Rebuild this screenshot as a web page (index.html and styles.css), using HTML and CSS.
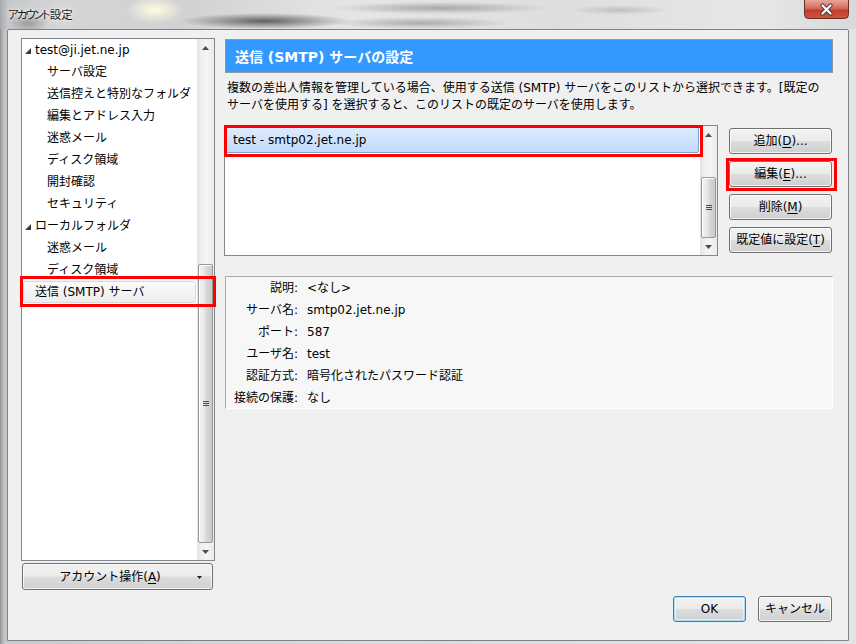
FILE: index.html
```html
<!DOCTYPE html>
<html lang="ja">
<head>
<meta charset="utf-8">
<title>アカウント設定</title>
<link rel="stylesheet" href="styles.css">
</head>
<body>
<div class="window">
  <div class="titlebar">
    <span class="title"><span class="kana">アカウント</span>設定</span>
    <div class="close">
      <svg width="45" height="19" viewBox="0 0 45 19">
        <defs>
          <linearGradient id="cg" x1="0" y1="0" x2="0" y2="1">
            <stop offset="0" stop-color="#e8a89b"/>
            <stop offset="0.45" stop-color="#d46a58"/>
            <stop offset="0.55" stop-color="#c23f2b"/>
            <stop offset="1" stop-color="#d0533b"/>
          </linearGradient>
        </defs>
        <path d="M0.5 0 V14.5 Q0.5 18.5 4.5 18.5 H40.5 Q44.5 18.5 44.5 14.5 V0" fill="url(#cg)" stroke="#6b2d24" stroke-width="1"/>
        <path d="M18.5 5.5 L26.5 13.5 M26.5 5.5 L18.5 13.5" stroke="#4a3b3b" stroke-width="4.2" stroke-linecap="round"/>
        <path d="M18.5 5.5 L26.5 13.5 M26.5 5.5 L18.5 13.5" stroke="#ffffff" stroke-width="2.2" stroke-linecap="round"/>
      </svg>
    </div>
  </div>

  <div class="client">
    <div class="main">
      <div class="left">
        <div class="tree">
          <div class="tree-items">
            <div class="row top"><svg class="tri" width="6" height="6" viewBox="0 0 6 6"><path d="M6 0 V6 H0 Z" fill="#3c3c3c"/></svg>test@ji.jet.ne.jp</div>
            <div class="row child">サーバ設定</div>
            <div class="row child">送信控えと特別なフォルダ</div>
            <div class="row child">編集とアドレス入力</div>
            <div class="row child">迷惑メール</div>
            <div class="row child">ディスク領域</div>
            <div class="row child">開封確認</div>
            <div class="row child">セキュリティ</div>
            <div class="row top"><svg class="tri" width="6" height="6" viewBox="0 0 6 6"><path d="M6 0 V6 H0 Z" fill="#3c3c3c"/></svg>ローカルフォルダ</div>
            <div class="row child">迷惑メール</div>
            <div class="row child">ディスク領域</div>
            <div class="row sel">送信 (SMTP) サーバ</div>
          </div>
          <div class="vscroll">
            <div class="sb-btn"><svg width="7" height="4" viewBox="0 0 7 4"><path d="M0 4 L3.5 0 L7 4 Z" fill="#4d4d4d"/></svg></div>
            <div class="sb-track">
              <div class="sb-thumb tree-thumb"><span class="grip"></span></div>
            </div>
            <div class="sb-btn"><svg width="7" height="4" viewBox="0 0 7 4"><path d="M0 0 L3.5 4 L7 0 Z" fill="#4d4d4d"/></svg></div>
          </div>
          <div class="redbox red-tree"></div>
        </div>
        <button class="btn acct"><span class="acct-label">アカウント操作(<u>A</u>)</span><span class="acct-arrow"><svg width="5" height="3" viewBox="0 0 5 3"><path d="M0 0 H5 L2.5 3 Z" fill="#222"/></svg></span></button>
      </div>

      <div class="right">
        <div class="header">送信 (SMTP) サーバの設定</div>
        <p class="desc">複数の差出人情報を管理している場合、使用する送信 (SMTP) サーバをこのリストから選択できます。[既定の<br>サーバを使用する] を選択すると、このリストの既定のサーバを使用します。</p>
        <div class="listrow">
          <div class="listbox">
            <div class="list-items">
              <div class="list-item">test - smtp02.jet.ne.jp</div>
            </div>
            <div class="vscroll">
              <div class="sb-btn"><svg width="7" height="4" viewBox="0 0 7 4"><path d="M0 4 L3.5 0 L7 4 Z" fill="#4d4d4d"/></svg></div>
              <div class="sb-track">
                <div class="sb-thumb list-thumb"><span class="grip"></span></div>
              </div>
              <div class="sb-btn"><svg width="7" height="4" viewBox="0 0 7 4"><path d="M0 0 L3.5 4 L7 0 Z" fill="#4d4d4d"/></svg></div>
            </div>
            <div class="redbox red-list"></div>
          </div>
          <div class="btncol">
            <button class="btn side">追加(<u>D</u>)...</button>
            <button class="btn side annotated">編集(<u>E</u>)...</button>
            <button class="btn side">削除(<u>M</u>)</button>
            <button class="btn side">既定値に設定(<u>T</u>)</button>
          </div>
        </div>
        <div class="details">
          <span class="lbl">説明:</span><span class="val">&lt;なし&gt;</span>
          <span class="lbl">サーバ名:</span><span class="val">smtp02.jet.ne.jp</span>
          <span class="lbl">ポート:</span><span class="val">587</span>
          <span class="lbl">ユーザ名:</span><span class="val">test</span>
          <span class="lbl">認証方式:</span><span class="val">暗号化されたパスワード認証</span>
          <span class="lbl">接続の保護:</span><span class="val">なし</span>
        </div>
      </div>
    </div>
    <div class="footer">
      <button class="btn foot default">OK</button>
      <button class="btn foot">キャンセル</button>
    </div>
  </div>
</div>
</body>
</html>
```

FILE: styles.css
```css
html, body {
  margin: 0;
  padding: 0;
}

body {
  width: 856px;
  height: 644px;
  overflow: hidden;
  font-family: "DejaVu Sans", "Noto Sans CJK JP", sans-serif;
  font-size: 12px;
  color: #000;
  background:
    linear-gradient(to right, #8e9296 0px, #b9bcbf 3px, #c9cbcd 7px, #d8dadc 40%, #e2e4e6 100%);
}

.window {
  display: flex;
  flex-direction: column;
  height: 644px;
}

/* ---------- title bar ---------- */
.titlebar {
  height: 29px;
  flex: none;
  display: flex;
  align-items: flex-start;
  background:
    radial-gradient(ellipse 20px 12px at 28px 22px, rgba(90, 90, 90, 0.45), rgba(90, 90, 90, 0) 100%),
    radial-gradient(ellipse 30px 14px at 155px 10px, rgba(255, 252, 225, 1), rgba(255, 252, 225, 0) 100%),
    radial-gradient(ellipse 85px 8px at 265px 21px, rgba(55, 55, 55, 0.75), rgba(55, 55, 55, 0) 100%),
    radial-gradient(ellipse 110px 6px at 440px 8px, rgba(110, 110, 110, 0.5), rgba(110, 110, 110, 0) 100%),
    radial-gradient(ellipse 90px 6px at 420px 23px, rgba(120, 120, 120, 0.5), rgba(120, 120, 120, 0) 100%),
    radial-gradient(ellipse 50px 5px at 620px 10px, rgba(130, 130, 130, 0.35), rgba(130, 130, 130, 0) 100%),
    linear-gradient(to right, #a7aaad 0px, #c6c8ca 8px, #d3d5d6 60px, #cfd1d3 180px, #e4e5e6 350px, #dcdedf 560px, #e6e7e8 760px, #d7d9db 856px);
}

.title {
  margin: 6px 0 0 8px;
  line-height: 16px;
  font-family: "Noto Sans CJK JP", sans-serif;
  font-size: 11.5px;
  font-feature-settings: "palt";
  color: #1a1a1a;
  text-shadow: 0 0 6px #fff, 0 0 3px #fff;
}

.kana {
  letter-spacing: -2px;
  margin-right: 1px;
}

.close {
  margin-left: auto;
  margin-right: 7px;
  height: 19px;
  line-height: 0;
}

/* ---------- client area ---------- */
.client {
  margin: 0 7px 3px 7px;
  height: 612px;
  box-sizing: border-box;
  border: 1px solid #7d8287;
  border-radius: 2px 2px 0 0;
  background: #f0f0f0;
  padding: 8px 15px 18px 13px;
  display: flex;
  flex-direction: column;
}

.main {
  display: flex;
  height: 552px;
}

.left {
  width: 194px;
  flex: none;
  display: flex;
  flex-direction: column;
}

.right {
  width: 608px;
  margin-left: 10px;
  display: flex;
  flex-direction: column;
}

/* ---------- tree ---------- */
.tree {
  position: relative;
  height: 523px;
  box-sizing: border-box;
  border: 1px solid #828790;
  background: #fff;
  display: flex;
}

.tree-items {
  flex: 1;
  min-width: 0;
}

.row {
  height: 22px;
  line-height: 22px;
  box-sizing: border-box;
  white-space: nowrap;
}

.row.top {
  padding-left: 3px;
  display: flex;
  align-items: center;
}

.tri {
  margin-right: 4px;
  margin-top: 1px;
}

.row.child {
  padding-left: 25px;
}

.row.sel {
  margin: 0 1px 0 1px;
  height: 22px;
  line-height: 20px;
  padding-left: 11px;
  border: 1px solid #dadada;
  border-radius: 3px;
  background: linear-gradient(#fbfbfb, #ededed);
}

/* ---------- scrollbars ---------- */
.vscroll {
  width: 17px;
  flex: none;
  display: flex;
  flex-direction: column;
  background: linear-gradient(to right, #e2e2e2, #efefef 25%, #f4f4f4 60%, #ebebeb);
}

.sb-btn {
  height: 17px;
  flex: none;
  display: flex;
  align-items: center;
  justify-content: center;
}

.sb-track {
  flex: 1;
  display: flex;
  flex-direction: column;
}

.sb-thumb {
  flex: 1;
  margin: 0 1px;
  border: 1px solid #979797;
  border-radius: 2px;
  background: linear-gradient(to right, #f4f4f4, #e8e8e8 40%, #d6d6d6 60%, #cacaca);
  box-shadow: inset 1px 1px 0 #fff;
  display: flex;
  align-items: center;
  justify-content: center;
}

.tree-thumb {
  margin-top: 208px;
}

.list-thumb {
  margin-top: 34px;
}

.grip {
  width: 6px;
  height: 6px;
  background:
    linear-gradient(#4c4c4c, #4c4c4c) 0 0 / 6px 1px no-repeat,
    linear-gradient(#4c4c4c, #4c4c4c) 0 2px / 6px 1px no-repeat,
    linear-gradient(#4c4c4c, #4c4c4c) 0 4px / 6px 1px no-repeat;
}

/* ---------- buttons ---------- */
.btn {
  font-family: inherit;
  font-size: 12px;
  color: #000;
  padding: 0;
  margin: 0;
  box-sizing: border-box;
  border: 1px solid #707070;
  border-radius: 3px;
  background: linear-gradient(#f2f2f2 0%, #ebebeb 49%, #dddddd 51%, #cfcfcf 100%);
  box-shadow: inset 0 0 0 1px rgba(255, 255, 255, 0.75);
  display: flex;
  align-items: center;
  justify-content: center;
  line-height: 16px;
}

.btn u {
  text-decoration-thickness: 1px;
  text-underline-offset: 2px;
}

.acct {
  margin: 2px 0 0 1px;
  width: 191px;
  height: 27px;
}

.acct-label {
  flex: 1;
  text-align: center;
}

.acct-arrow {
  width: 5px;
  margin-right: 10px;
  line-height: 0;
}

/* ---------- right side ---------- */
.header {
  margin-top: 1px;
  height: 34px;
  box-sizing: border-box;
  border: 1px solid #8d99a6;
  background: #3399ff;
  color: #fff;
  font-weight: bold;
  font-size: 14px;
  padding-left: 9px;
  display: flex;
  align-items: center;
}

.desc {
  margin: 7px 0 0 2px;
  line-height: 17px;
  white-space: nowrap;
}

.listrow {
  display: flex;
  margin-top: 11px;
  margin-left: -1px;
}

.listbox {
  position: relative;
  width: 494px;
  height: 131px;
  box-sizing: border-box;
  border: 1px solid #828790;
  background: #fff;
  display: flex;
}

.list-items {
  flex: 1;
  min-width: 0;
  padding: 1px 1px 0 1px;
}

.list-item {
  height: 26px;
  box-sizing: border-box;
  border: 1px solid #7da2ce;
  border-radius: 2px;
  background: linear-gradient(#dcebfc, #c1dbfc);
  line-height: 24px;
  padding-left: 6px;
  white-space: nowrap;
}

.btncol {
  margin-left: 11px;
  padding-top: 3px;
  width: 103px;
  display: flex;
  flex-direction: column;
  gap: 7px;
}

.btn.side {
  width: 103px;
  height: 26px;
}

.annotated {
  position: relative;
}

.annotated::after {
  content: "";
  position: absolute;
  left: -4px;
  top: -4px;
  right: -6px;
  bottom: -5px;
  border: 3px solid #ff0000;
  pointer-events: none;
}

.details {
  margin-top: 20px;
  height: 133px;
  box-sizing: border-box;
  border-style: solid;
  border-width: 1px;
  border-color: #a9a9a9 #ffffff #ffffff #a9a9a9;
  background: #f7f7f7;
  display: grid;
  grid-template-columns: 72px auto;
  grid-auto-rows: 22px;
  column-gap: 9px;
  align-content: start;
}

.lbl {
  text-align: right;
  line-height: 22px;
  white-space: nowrap;
}

.val {
  line-height: 22px;
  white-space: nowrap;
}

/* ---------- footer ---------- */
.footer {
  margin-top: 6px;
  display: flex;
  justify-content: flex-end;
  gap: 12px;
  padding-right: 1px;
}

.btn.foot {
  width: 74px;
  height: 26px;
}

.btn.default {
  width: 73px;
  border-color: #3c7fb1;
  box-shadow: inset 0 0 0 1px #a9dcf5, inset 0 0 0 2px rgba(255, 255, 255, 0.5);
}

/* ---------- annotation boxes ---------- */
.redbox {
  position: absolute;
  box-sizing: border-box;
  border: 3px solid #ff0000;
  pointer-events: none;
}

.red-tree {
  left: -2px;
  top: 237px;
  width: 196px;
  height: 31px;
}

.red-list {
  left: -1px;
  top: -1px;
  width: 479px;
  height: 32px;
}
```
